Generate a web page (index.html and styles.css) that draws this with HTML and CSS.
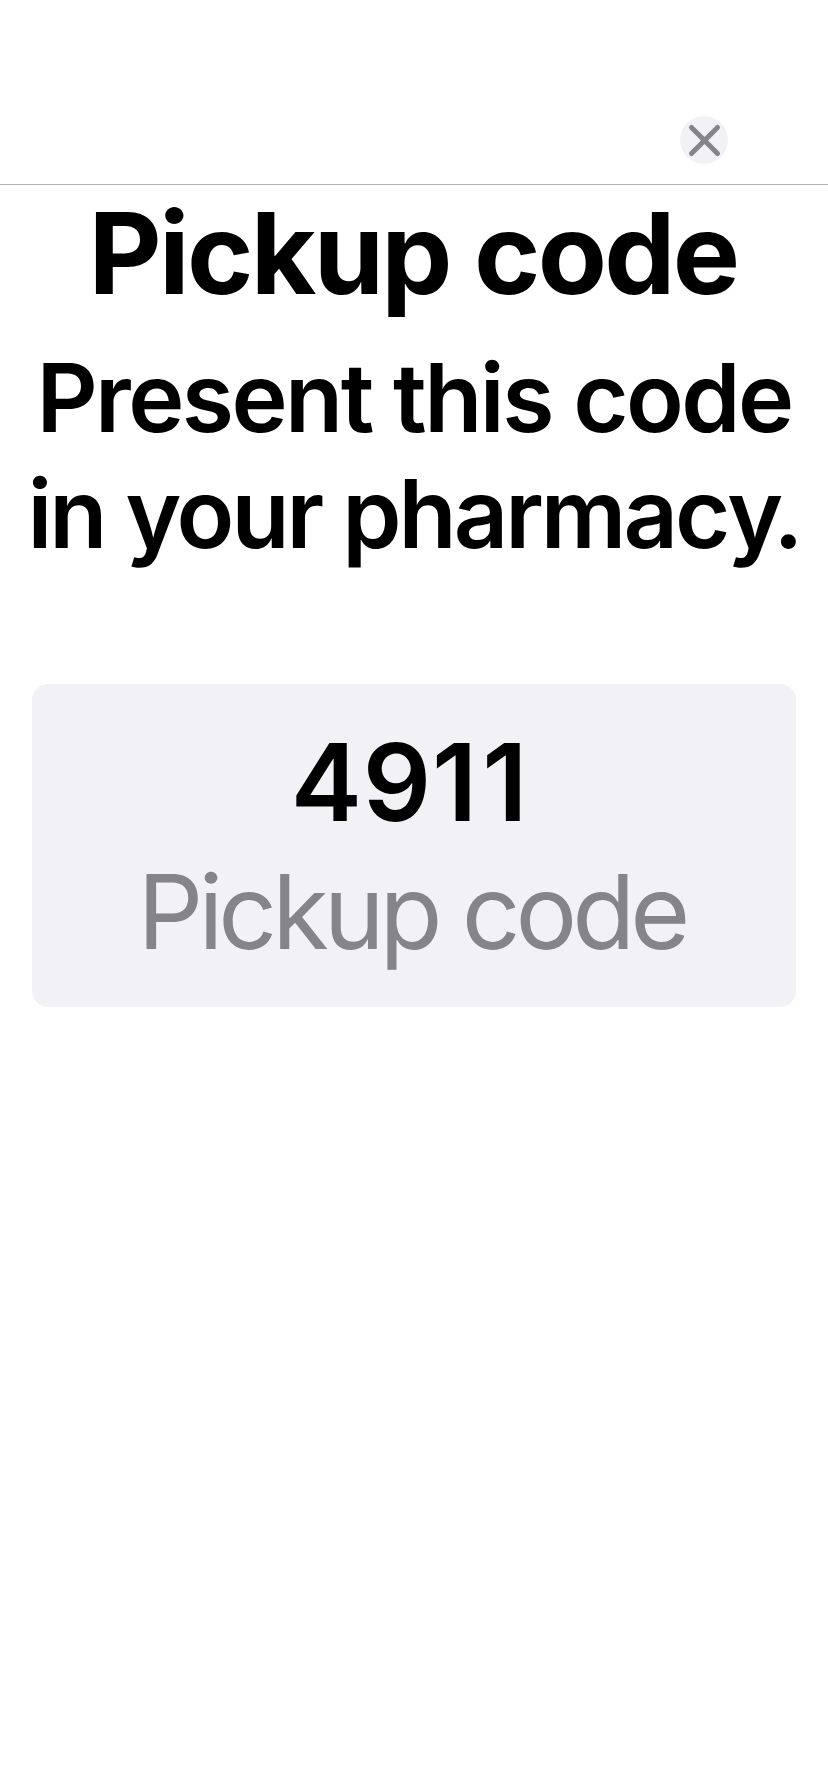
FILE: index.html
```html
<!DOCTYPE html>
<html lang="en">
<head>
<meta charset="utf-8">
<title>Pickup code</title>
<link rel="stylesheet" href="styles.css">
</head>
<body>
<header class="bar">
<button class="close" aria-label="Close"><svg viewBox="0 0 48 48" width="48" height="48"><path d="M11.5 11.5L37.5 37.5M37.5 11.5L11.5 37.5"/></svg></button>
</header>
<main class="content">
<h1 class="title">Pickup code</h1>
<p class="lead"><span class="line-one">Present this code</span><br><span class="line-two">in your pharmac<span class="tight">y</span>.</span></p>
<section class="card">
<div class="code">49<span class="one">1</span>1</div>
<div class="label">Pickup code</div>
</section>
</main>
</body>
</html>
```

FILE: styles.css
```css
* { box-sizing: border-box; }
body { margin: 0; background: #fff; color: #000; font-family: Inter, "Liberation Sans", sans-serif; }
.bar { height: 185px; border-bottom: 1px solid #b2b1b4; display: flex; justify-content: flex-end; align-items: flex-start; padding: 116px 100px 0 0; }
.close { width: 48px; height: 48px; border: 0; padding: 0; border-radius: 50%; background: #f2f1f6; }
.close svg { display: block; fill: none; stroke: #858489; stroke-width: 5; stroke-linecap: round; }
.content { padding: 0 32px; text-align: center; white-space: nowrap; }
.title { margin: 0; padding-right: 2px; font-size: 113px; line-height: 136px; font-weight: 700; letter-spacing: -2.7px; }
.lead { margin: 19px -10px 0; font-size: 95px; line-height: 116px; font-weight: 600; }
.line-one { letter-spacing: -2.55px; }
.line-two { letter-spacing: -3px; }
.tight { letter-spacing: -10px; }
.card { margin-top: 112px; height: 323px; border-radius: 16px; background: #f2f1f6; padding-top: 33px; }
.code { padding-right: 9px; font-size: 107px; line-height: 130px; font-weight: 600; letter-spacing: 0.8px; }
.one { letter-spacing: 5px; }
.label { padding-right: 5px; font-size: 103px; line-height: 130px; color: #858489; letter-spacing: -5px; }
```
